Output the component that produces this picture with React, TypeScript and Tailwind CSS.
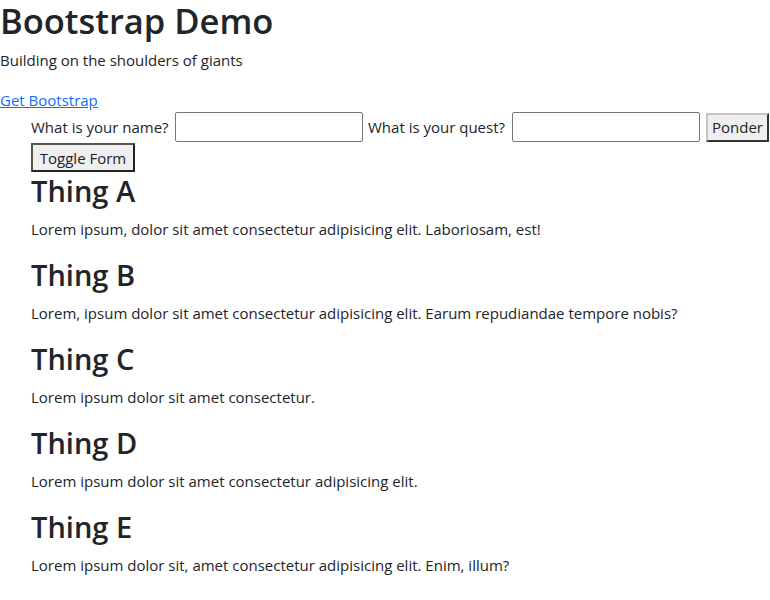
import React, { useState } from 'react';

const things = [
  { title: 'Thing A', text: 'Lorem ipsum, dolor sit amet consectetur adipisicing elit. Laboriosam, est!' },
  { title: 'Thing B', text: 'Lorem, ipsum dolor sit amet consectetur adipisicing elit. Earum repudiandae tempore nobis?' },
  { title: 'Thing C', text: 'Lorem ipsum dolor sit amet consectetur.' },
  { title: 'Thing D', text: 'Lorem ipsum dolor sit amet consectetur adipisicing elit.' },
  { title: 'Thing E', text: 'Lorem ipsum dolor sit, amet consectetur adipisicing elit. Enim, illum?' },
];

const App: React.FC = () => {
  const [showForm, setShowForm] = useState(true);

  return (
    <div className="min-h-[600px] bg-white text-[#212529] text-[15px] leading-[24px] font-['Segoe_UI','Open_Sans',sans-serif]">
      {/* Header */}
      <h1 className="text-[34.5px] leading-[42px] font-semibold mb-[6px]">Bootstrap Demo</h1>
      <p className="mb-4">Building on the shoulders of giants</p>
      <a href="#" className="text-[#0d6efd] underline">Get Bootstrap</a>

      <div className="pl-[31px]">
        {showForm && (
          <form className="flex items-center gap-[5px] whitespace-nowrap" onSubmit={e => e.preventDefault()}>
            <label className="w-[139px]">What is your name?</label>
            <input type="text" className="w-[188px] h-[30px] border border-[#767676] rounded-[2px] px-1" />
            <label className="w-[139px]">What is your quest?</label>
            <input type="text" className="w-[188px] h-[30px] border border-[#767676] rounded-[2px] px-1" />
            <button
              type="submit"
              className="ml-px h-[29px] w-[63px] bg-[#efefef] border-2 border-t-[#c4c4c4] border-l-[#c4c4c4] border-b-[#333] border-r-[#333]"
            >
              Ponder
            </button>
          </form>
        )}
        <button
          type="button"
          onClick={() => setShowForm(!showForm)}
          className="mt-px mb-px h-[29px] w-[104px] bg-[#efefef] border-2 border-t-[#555] border-l-[#555] border-b-[#222] border-r-[#222]"
        >
          Toggle Form
        </button>

        {things.map(t => (
          <div key={t.title}>
            <h2 className="text-[29px] leading-[36px] font-semibold mb-2">{t.title}</h2>
            <p className="mb-4">{t.text}</p>
          </div>
        ))}
      </div>
    </div>
  );
};

export default App;
